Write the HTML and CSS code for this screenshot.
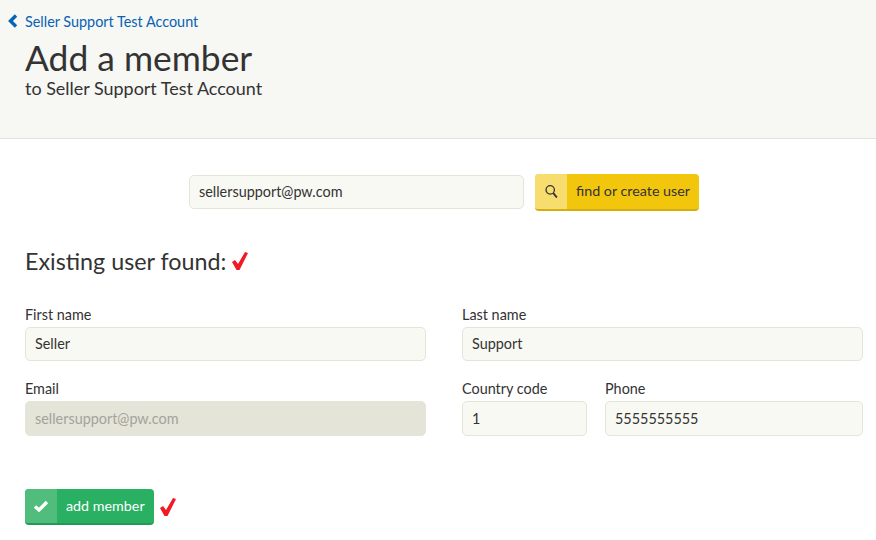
FILE: index.html
```html
<!DOCTYPE html>
<html lang="en">
  <head>
    <meta charset="UTF-8" />
    <meta name="viewport" content="width=device-width, initial-scale=1.0" />
    <title>Add a member</title>
    <link rel="stylesheet" href="styles.css">
  </head>
  <body>
    <header class="page-header">
      <a class="back-link" href="#">
        <svg class="back-icon" viewBox="0 0 10 14" width="10" height="14">
          <path d="M8 1.5 2.5 7 8 12.5" fill="none" stroke="#0862b5" stroke-width="3.4" />
        </svg>
        Seller Support Test Account
      </a>
      <h1>Add a member</h1>
      <p class="subtitle">to Seller Support Test Account</p>
    </header>

    <main class="content">
      <form class="search-form">
        <input class="field search-input" type="text" value="sellersupport@pw.com" />
        <button class="btn btn-yellow" type="button">
          <span class="btn-icon">
            <svg viewBox="0 0 14 14" width="15" height="15">
              <circle cx="5.8" cy="5.5" r="3.9" fill="none" stroke="#333" stroke-width="1.2" />
              <path d="M8.5 8.3 12 12.6" fill="none" stroke="#333" stroke-width="1.8" />
            </svg>
          </span>
          <span class="btn-text">find or create user</span>
        </button>
      </form>

      <h2>
        Existing user found:
        <svg class="red-check" viewBox="0 0 16 18" width="16" height="18">
          <path d="M0 10 3 8 6 12 13 0 16 1 7.5 18 4.5 18Z" fill="#f01a24" />
        </svg>
      </h2>

      <form class="member-form">
        <div class="form-row">
          <div class="group">
            <label for="first">First name</label>
            <input class="field" id="first" type="text" value="Seller" />
          </div>
          <div class="group">
            <label for="last">Last name</label>
            <input class="field" id="last" type="text" value="Support" />
          </div>
        </div>
        <div class="form-row">
          <div class="group">
            <label for="email">Email</label>
            <input class="field tall" id="email" type="text" value="sellersupport@pw.com" disabled />
          </div>
          <div class="phone-row">
            <div class="group country">
              <label for="code">Country code</label>
              <input class="field tall" id="code" type="text" value="1" />
            </div>
            <div class="group phone">
              <label for="phone">Phone</label>
              <input class="field tall" id="phone" type="text" value="5555555555" />
            </div>
          </div>
        </div>
        <div class="actions">
          <button class="btn btn-green" type="button">
            <span class="btn-icon">
              <svg viewBox="0 0 16 14" width="16" height="14">
                <path d="M2 7.5 6 11 14 3" fill="none" stroke="#fff" stroke-width="3.4" />
              </svg>
            </span>
            <span class="btn-text">add member</span>
          </button>
          <svg class="red-check" viewBox="0 0 16 18" width="16" height="18">
            <path d="M0 10 3 8 6 12 13 0 16 1 7.5 18 4.5 18Z" fill="#f01a24" />
          </svg>
        </div>
      </form>
    </main>
  </body>
</html>
```

FILE: styles.css
```css
* {
  box-sizing: border-box;
}

body {
  margin: 0;
  font-family: Lato, "Open Sans", sans-serif;
  font-size: 14.4px;
  color: #333;
  background-color: #fff;
}

.page-header {
  height: 139px;
  padding: 12px 25px 0;
  background-color: #f7f7f3;
  border-bottom: 1px solid #e4e4d9;
}

.back-link {
  display: flex;
  align-items: center;
  gap: 7px;
  margin-left: -17px;
  height: 18px;
  color: #0862b5;
  text-decoration: none;
}

h1 {
  margin: 6px 0 0;
  font-size: 35.4px;
  font-weight: 400;
  line-height: 43px;
}

.subtitle {
  margin: 0;
  font-size: 17.95px;
  line-height: 18px;
}

.content {
  padding: 35px 13px 0 25px;
}

.search-form {
  display: flex;
  align-items: flex-start;
  gap: 11px;
  margin-left: 164px;
}

.field {
  display: block;
  width: 100%;
  height: 34px;
  padding: 0 9px 1px;
  font-family: inherit;
  font-size: 14.4px;
  color: #333;
  background-color: #f9f9f3;
  border: 1px solid #e4e4d9;
  border-radius: 5px;
}

.field.tall {
  height: 35px;
}

.field:disabled {
  color: #a3a39b;
  background-color: #e4e4d9;
}

.search-input {
  width: 335px;
  margin-top: 1px;
}

.btn {
  display: flex;
  padding: 0;
  font-family: inherit;
  font-size: 14.3px;
  white-space: nowrap;
  border: none;
  border-radius: 4px;
  overflow: hidden;
}

.btn-icon {
  display: flex;
  align-items: center;
  justify-content: center;
  flex: none;
  width: 32px;
  height: 100%;
}

.btn-text {
  display: flex;
  align-items: center;
  padding: 0 0 1px 9px;
}

.btn-yellow {
  width: 164px;
  height: 37px;
  color: #333;
  background-color: #f3c60e;
  border-bottom: 2px solid #d5ad0c;
}

.btn-yellow .btn-text {
  padding-bottom: 2px;
}

.btn-yellow .btn-icon {
  background-color: #f7dc6e;
}

.btn-green {
  width: 129px;
  height: 36px;
  color: #fff;
  background-color: #29b062;
  border-bottom: 2px solid #229a54;
}

.btn-green .btn-icon {
  background-color: #50bd7c;
}

h2 {
  display: flex;
  align-items: center;
  gap: 6px;
  margin: 34px 0 0;
  font-size: 23.3px;
  font-weight: 400;
  line-height: 32px;
}

.member-form {
  margin-top: 28px;
}

.form-row {
  display: grid;
  grid-template-columns: 401px 401px;
  gap: 36px;
  margin-bottom: 18px;
}

.phone-row {
  display: flex;
  gap: 18px;
}

.country {
  width: 125px;
}

.phone {
  flex: 1;
}

label {
  display: block;
  height: 22px;
  line-height: 19px;
}

.actions {
  display: flex;
  align-items: center;
  gap: 6px;
  margin-top: 53px;
}
```
